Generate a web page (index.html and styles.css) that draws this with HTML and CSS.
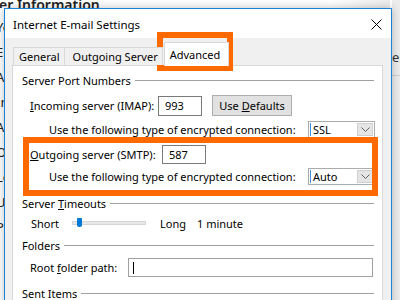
FILE: index.html
```html
<!DOCTYPE html>
<html lang="en">
  <head>
    <meta charset="UTF-8" />
    <meta name="viewport" content="width=device-width, initial-scale=1.0" />
    <title>Internet E-mail Settings</title>
    <link rel="stylesheet" href="styles.css">
  </head>
  <body>
    <!-- the account window behind the dialog -->
    <div class="backdrop">
      <div class="backdrop-title">er Information</div>
      <div class="backdrop-labels">
        <span>Your</span>
        <span>Email</span>
        <span>Acc</span>
        <span>Incoming</span>
        <span>Acc</span>
        <span>Out</span>
        <span>Log</span>
        <span>Use</span>
        <span>Pass</span>
      </div>
      <div class="backdrop-side">ep</div>
    </div>

    <div class="dialog">
      <div class="titlebar">
        <span class="title">Internet E-mail Settings</span>
        <svg class="close" width="11" height="11" viewBox="0 0 11 11">
          <path d="M0.5 0.5 L10.5 10.5 M10.5 0.5 L0.5 10.5" stroke="#000" stroke-width="1" fill="none" />
        </svg>
      </div>

      <div class="dialog-body">
        <div class="tabs">
          <div class="tab">General</div>
          <div class="tab">Outgoing Server</div>
          <div class="tab active">Advanced</div>
        </div>

        <div class="panel">
          <div class="group-head"><span>Server Port Numbers</span></div>

          <div class="row row-incoming">
            <label class="label-port"><u>I</u>ncoming server (IMAP):</label>
            <div class="textbox port">993</div>
            <div class="button"><span>Use <u>D</u>efaults</span></div>
          </div>

          <div class="row row-enc">
            <label class="label-enc">Use the following type of encrypted connection:</label>
            <div class="combo">
              <span class="combo-text">SSL</span>
              <span class="combo-btn">
                <svg width="9" height="5" viewBox="0 0 9 5"><path d="M0.5 0.5 L4.5 4.5 L8.5 0.5" stroke="#606060" fill="none" /></svg>
              </span>
            </div>
          </div>

          <div class="row row-outgoing">
            <label class="label-port wide"><u>O</u>utgoing server (SMTP):</label>
            <div class="textbox port">587</div>
          </div>

          <div class="row row-enc tight">
            <label class="label-enc">Use the following type of encrypted connection:</label>
            <div class="combo">
              <span class="combo-text">Auto</span>
              <span class="combo-btn">
                <svg width="9" height="5" viewBox="0 0 9 5"><path d="M0.5 0.5 L4.5 4.5 L8.5 0.5" stroke="#606060" fill="none" /></svg>
              </span>
            </div>
          </div>

          <div class="group-head spaced"><span>Server <u>T</u>imeouts</span></div>

          <div class="row row-slider">
            <span class="short">Short</span>
            <div class="slider"><span class="thumb"></span></div>
            <span class="long">Long</span>
            <span>1 minute</span>
          </div>

          <div class="group-head"><span>Folders</span></div>

          <div class="row row-root">
            <label class="label-root">Root <u>f</u>older path:</label>
            <div class="textbox path"><span class="caret"></span></div>
          </div>

          <div class="group-head sent"><span>Sent Items</span></div>
        </div>
      </div>
    </div>

    <!-- orange call-outs drawn over the screenshot -->
    <div class="callout callout-tab"></div>
    <div class="callout callout-smtp"></div>
  </body>
</html>
```

FILE: styles.css
```css
body {
  margin: 0;
  width: 400px;
  height: 300px;
  overflow: hidden;
  position: relative;
  background: #ffffff;
  font-family: "Noto Sans", "Open Sans", sans-serif;
  font-size: 11px;
  color: #000;
  white-space: nowrap;
}

.backdrop {
  position: absolute;
  inset: 0;
}

/* only the bits that peek out round the dialog */
.backdrop-title {
  position: absolute;
  left: 0;
  top: 0;
  width: 390px;
  height: 8px;
  overflow: hidden;
  font-size: 14px;
  font-weight: 600;
  line-height: 10px;
  text-indent: -1px;
  color: #222;
  background: linear-gradient(to right, #fff 330px, #ececec);
}

.backdrop-labels {
  position: absolute;
  left: 0;
  top: 19px;
  width: 4px;
  overflow: hidden;
  display: flex;
  flex-direction: column;
  gap: 8px;
  font-size: 13px;
  line-height: 17px;
  text-indent: -4px;
  color: #222;
}

.backdrop-side {
  position: absolute;
  left: 392px;
  top: 0;
  width: 8px;
  height: 300px;
  padding-top: 49px;
  box-sizing: border-box;
  background: #ececec;
  font-size: 13px;
  line-height: 16px;
  color: #333;
  overflow: hidden;
}

.backdrop-side::after {
  content: "";
  display: block;
  margin-top: 10px;
  height: 1px;
  background: #cfcfcf;
}

.dialog {
  position: absolute;
  left: 4px;
  top: 8px;
  width: 386px;
  height: 300px;
  border: 1px solid #1883d7;
  background: #f0f0f0;
  box-shadow: 0 0 8px rgba(0, 0, 0, 0.25);
}

.titlebar {
  height: 29px;
  background: #fff;
  display: flex;
  align-items: center;
  justify-content: space-between;
  padding: 0 9px 0 8px;
}

.title {
  font-size: 11.5px;
  padding-top: 2px;
}

.close {
  margin-top: 1px;
}

.dialog-body {
  padding: 5px 8px 0 7px;
}

.tabs {
  display: flex;
  align-items: flex-end;
  height: 22px;
  padding-left: 1px;
  position: relative;
  z-index: 1;
}

.tab {
  height: 17px;
  padding: 0 4px 0 5px;
  border: 1px solid #d9d9d9;
  border-bottom: none;
  border-right: none;
  background: #f0f0f0;
  line-height: 17px;
}

.tab + .tab {
  padding-left: 8px;
}

.tab:nth-child(2) {
  border-right: 1px solid #d9d9d9;
}

.tab.active {
  height: 23px;
  margin-left: 1px;
  padding: 0 8px 0 5px;
  background: #fff;
  border-right: 1px solid #d9d9d9;
  line-height: 23px;
  margin-bottom: -1px;
}

.panel {
  background: #fff;
  border: 1px solid #d9d9d9;
  height: 260px;
  padding: 6px 8px 0 9px;
}

.group-head {
  display: flex;
  align-items: center;
  height: 16px;
  gap: 4px;
}

.group-head::after {
  content: "";
  flex: 1;
  height: 1px;
  background: #a0a0a0;
}

.group-head.spaced {
  margin-top: 10px;
}

.group-head.sent {
  margin-top: 8px;
}

.row {
  display: flex;
  align-items: center;
  padding-left: 8px;
}

.row > * {
  flex-shrink: 0;
}

.row-incoming {
  height: 21px;
  margin-top: 7px;
}

.row-enc {
  height: 17px;
  margin-top: 5px;
  padding-left: 27px;
}

.row-enc.tight {
  margin-top: 4px;
}

.row-outgoing {
  height: 19px;
  margin-top: 7px;
}

.row-slider {
  height: 16px;
  margin-top: 4px;
  margin-bottom: 6px;
  padding-left: 9px;
}

.row-root {
  height: 19px;
  margin-top: 5px;
}

.label-port {
  width: 128px;
}

.label-port.wide {
  width: 132px;
}

.label-enc {
  width: 259px;
}

.label-root {
  width: 98px;
}

.textbox {
  height: 17px;
  border: 1px solid #7a7a7a;
  background: #fff;
  line-height: 17px;
  padding-left: 6px;
}

.row-incoming .textbox {
  height: 18px;
  line-height: 18px;
}

.textbox.port {
  width: 36px;
}

.textbox.path {
  width: 239px;
  border-color: #a0a0a0;
  padding-left: 4px;
  display: flex;
  align-items: center;
}

.caret {
  width: 1px;
  height: 12px;
  background: #000;
}

.button {
  margin-left: 10px;
  width: 78px;
  height: 19px;
  border: 1px solid #adadad;
  background: #e1e1e1;
  display: flex;
  align-items: center;
  justify-content: center;
}

.combo {
  display: flex;
  width: 65px;
  height: 15px;
  border: 1px solid #acacac;
  background: #fff;
}

.combo-text {
  flex: 1;
  border-left: 1px solid #3c8ee0;
  margin: 1px 0 1px 1px;
  padding-left: 2px;
  line-height: 13px;
}

.combo-btn {
  width: 16px;
  margin: 1px;
  background: #e5e5e5;
  border: 1px solid #cfcfcf;
  box-sizing: border-box;
  display: flex;
  align-items: center;
  justify-content: center;
}

.short {
  width: 41px;
}

.slider {
  width: 72px;
  height: 2px;
  background: #e7e7e7;
  border: 1px solid #d6d6d6;
  position: relative;
  margin-right: 14px;
}

.thumb {
  position: absolute;
  left: 4px;
  top: -4px;
  width: 5px;
  height: 9px;
  background: #0078d7;
  border-radius: 1px 1px 2px 2px;
}

.long {
  width: 37px;
}

.callout {
  position: absolute;
  border: 6px solid #ff6a00;
  box-sizing: border-box;
}

.callout-tab {
  left: 157px;
  top: 32px;
  width: 76px;
  height: 39px;
}

.callout-smtp {
  left: 23px;
  top: 137px;
  width: 355px;
  height: 59px;
}
```
